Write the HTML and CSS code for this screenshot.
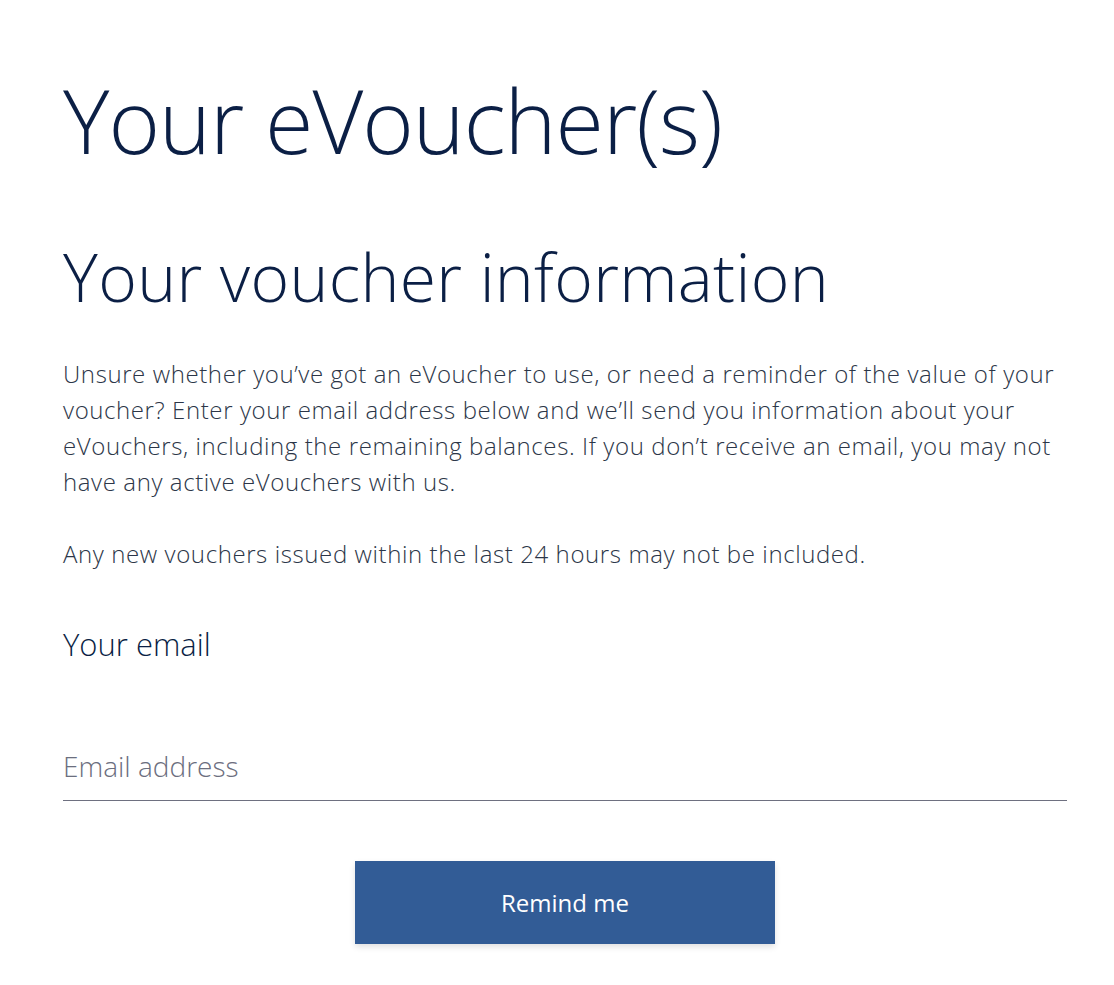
FILE: index.html
```html
<!DOCTYPE html>
<html lang="en">
<head>
<meta charset="utf-8">
<title>Your eVoucher(s)</title>
<link rel="stylesheet" href="styles.css">
</head>
<body>
<main class="page">
  <h1 class="title">Your eVoucher(s)</h1>
  <h2 class="subtitle">Your voucher information</h2>
  <p class="text">Unsure whether you’ve got an eVoucher to use, or need a reminder of the value of your voucher? Enter your email address below and we’ll send you information about your eVouchers, including the remaining balances. If you don’t receive an email, you may not have any active eVouchers with us.</p>
  <p class="text">Any new vouchers issued within the last 24 hours may not be included.</p>
  <form class="form">
    <label class="label" for="email">Your email</label>
    <input class="input" id="email" type="email" placeholder="Email address">
    <div class="actions">
      <button class="button" type="button">Remind me</button>
    </div>
  </form>
</main>
</body>
</html>
```

FILE: styles.css
```css
html, body {
  margin: 0;
  padding: 0;
  background: #ffffff;
}

body {
  font-family: "Open Sans", "Liberation Sans", sans-serif;
  color: #0b1f45;
}

.page {
  width: 1004px;
  padding: 60px 0 40px 63px;
}

.title {
  margin: 0;
  font-size: 88px;
  font-weight: 300;
  line-height: 120px;
  color: #0b1f45;
  letter-spacing: -1px;
}

.subtitle {
  margin: 51px 0 0;
  font-size: 66px;
  font-weight: 300;
  line-height: 90px;
  color: #0b1f45;
  letter-spacing: 0.3px;
}

.text {
  margin: 35px 0 0;
  font-size: 24px;
  font-weight: 300;
  line-height: 36px;
  letter-spacing: 0.6px;
  color: #2c3648;
}

.text + .text {
  margin-top: 36px;
}

.form {
  display: flex;
  flex-direction: column;
  margin-top: 52px;
}

.label {
  font-size: 31px;
  font-weight: 300;
  line-height: 40px;
  color: #0b1f45;
}

.input {
  margin-top: 82px;
  border: 0;
  border-bottom: 1px solid #6e7080;
  padding: 0 0 14px;
  font-family: inherit;
  font-size: 28px;
  font-weight: 300;
  line-height: 40px;
  color: #0b1f45;
  outline: none;
  background: transparent;
}

.input::placeholder {
  color: #6b6e7e;
  opacity: 1;
}

.actions {
  display: flex;
  justify-content: center;
  margin-top: 60px;
}

.button {
  width: 420px;
  height: 83px;
  border: 0;
  background: #325c96;
  color: #ffffff;
  font-family: "Open Sans", "Liberation Sans", sans-serif;
  font-size: 24px;
  font-weight: 400;
  box-shadow: 0 3px 6px rgba(0, 0, 0, 0.12);
  cursor: pointer;
}
```
